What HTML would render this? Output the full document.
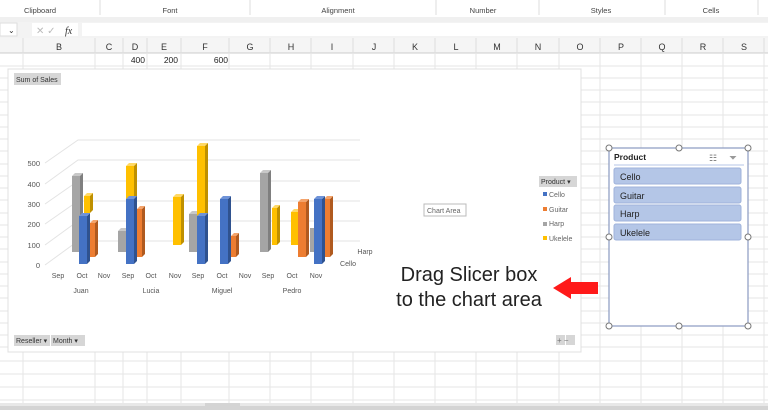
<!DOCTYPE html><html><head><style>
body{margin:0;width:768px;height:410px;overflow:hidden;background:#fff;font-family:"Liberation Sans",sans-serif;position:relative}
.a{position:absolute}
</style></head><body>
<svg class="a" style="left:0;top:0" width="768" height="410">
<!-- ribbon -->
<rect x="0" y="0" width="768" height="17" fill="#fff"/>
<rect x="0" y="17" width="768" height="5" fill="#f0f0f0"/>
<g font-size="7.5" fill="#444" text-anchor="middle">
<text x="40" y="13">Clipboard</text><text x="170" y="13">Font</text><text x="338" y="13">Alignment</text><text x="483" y="13">Number</text><text x="601" y="13">Styles</text><text x="711" y="13">Cells</text></g>
<g stroke="#ddd"><line x1="100" y1="0" x2="100" y2="15"/><line x1="250" y1="0" x2="250" y2="15"/><line x1="436" y1="0" x2="436" y2="15"/><line x1="539" y1="0" x2="539" y2="15"/><line x1="665" y1="0" x2="665" y2="15"/><line x1="758" y1="0" x2="758" y2="15"/></g>
<!-- formula bar -->
<rect x="0" y="22" width="768" height="16" fill="#f3f3f3"/>
<rect x="0" y="23" width="17" height="13" fill="#fff" stroke="#ddd"/>
<text x="8" y="33" font-size="8" fill="#333">⌄</text>
<rect x="32" y="23" width="46" height="13" fill="#fff"/>
<text x="36" y="34" font-size="10" fill="#bbb">✕ ✓</text><text x="65" y="34" font-size="10" font-style="italic" fill="#333" font-family="Liberation Serif">fx</text>
<rect x="82" y="23" width="686" height="13" fill="#fff"/>
<!-- column header -->
<rect x="0" y="38" width="768" height="15" fill="#f5f5f5"/>
<line x1="0" y1="53" x2="768" y2="53" stroke="#ccc"/>
<g stroke="#ddd">
<line x1="23" y1="38" x2="23" y2="53"/><line x1="95" y1="38" x2="95" y2="53"/><line x1="123" y1="38" x2="123" y2="53"/><line x1="147" y1="38" x2="147" y2="53"/><line x1="181" y1="38" x2="181" y2="53"/><line x1="229" y1="38" x2="229" y2="53"/><line x1="270" y1="38" x2="270" y2="53"/><line x1="311" y1="38" x2="311" y2="53"/><line x1="353" y1="38" x2="353" y2="53"/><line x1="394" y1="38" x2="394" y2="53"/><line x1="435" y1="38" x2="435" y2="53"/><line x1="476" y1="38" x2="476" y2="53"/><line x1="517" y1="38" x2="517" y2="53"/><line x1="559" y1="38" x2="559" y2="53"/><line x1="600" y1="38" x2="600" y2="53"/><line x1="641" y1="38" x2="641" y2="53"/><line x1="682" y1="38" x2="682" y2="53"/><line x1="723" y1="38" x2="723" y2="53"/><line x1="764" y1="38" x2="764" y2="53"/></g>
<g font-size="9" fill="#333" text-anchor="middle">
<text x="59" y="50">B</text><text x="109" y="50">C</text><text x="135" y="50">D</text><text x="164" y="50">E</text><text x="205" y="50">F</text><text x="250" y="50">G</text><text x="291" y="50">H</text><text x="332" y="50">I</text><text x="374" y="50">J</text><text x="415" y="50">K</text><text x="456" y="50">L</text><text x="497" y="50">M</text><text x="538" y="50">N</text><text x="580" y="50">O</text><text x="621" y="50">P</text><text x="662" y="50">Q</text><text x="703" y="50">R</text><text x="744" y="50">S</text></g>
<!-- grid -->
<g stroke="#e6e6e6">
<line x1="0" y1="66" x2="768" y2="66"/><line x1="0" y1="78" x2="768" y2="78"/><line x1="0" y1="90" x2="768" y2="90"/><line x1="0" y1="102" x2="768" y2="102"/><line x1="0" y1="115" x2="768" y2="115"/><line x1="0" y1="127" x2="768" y2="127"/><line x1="0" y1="139" x2="768" y2="139"/><line x1="0" y1="151" x2="768" y2="151"/><line x1="0" y1="164" x2="768" y2="164"/><line x1="0" y1="176" x2="768" y2="176"/><line x1="0" y1="188" x2="768" y2="188"/><line x1="0" y1="200" x2="768" y2="200"/><line x1="0" y1="213" x2="768" y2="213"/><line x1="0" y1="225" x2="768" y2="225"/><line x1="0" y1="237" x2="768" y2="237"/><line x1="0" y1="249" x2="768" y2="249"/><line x1="0" y1="262" x2="768" y2="262"/><line x1="0" y1="274" x2="768" y2="274"/><line x1="0" y1="286" x2="768" y2="286"/><line x1="0" y1="298" x2="768" y2="298"/><line x1="0" y1="311" x2="768" y2="311"/><line x1="0" y1="323" x2="768" y2="323"/><line x1="0" y1="335" x2="768" y2="335"/><line x1="0" y1="347" x2="768" y2="347"/><line x1="0" y1="361" x2="768" y2="361"/><line x1="0" y1="374" x2="768" y2="374"/><line x1="0" y1="387" x2="768" y2="387"/><line x1="0" y1="400" x2="768" y2="400"/>
<line x1="23" y1="53" x2="23" y2="405"/><line x1="95" y1="53" x2="95" y2="405"/><line x1="123" y1="53" x2="123" y2="405"/><line x1="147" y1="53" x2="147" y2="405"/><line x1="181" y1="53" x2="181" y2="405"/><line x1="229" y1="53" x2="229" y2="405"/><line x1="270" y1="53" x2="270" y2="405"/><line x1="311" y1="53" x2="311" y2="405"/><line x1="353" y1="53" x2="353" y2="405"/><line x1="394" y1="53" x2="394" y2="405"/><line x1="435" y1="53" x2="435" y2="405"/><line x1="476" y1="53" x2="476" y2="405"/><line x1="517" y1="53" x2="517" y2="405"/><line x1="559" y1="53" x2="559" y2="405"/><line x1="600" y1="53" x2="600" y2="405"/><line x1="641" y1="53" x2="641" y2="405"/><line x1="682" y1="53" x2="682" y2="405"/><line x1="723" y1="53" x2="723" y2="405"/><line x1="764" y1="53" x2="764" y2="405"/></g>
<g font-size="8.5" fill="#222" text-anchor="end"><text x="145" y="63">400</text><text x="178" y="63">200</text><text x="228" y="63">600</text></g>
<rect x="0" y="403" width="768" height="7" fill="#d4d4d4"/><rect x="0" y="403" width="205" height="3" fill="#e8e8e8"/><rect x="240" y="403" width="528" height="3" fill="#e8e8e8"/>
<!-- chart area -->
<rect x="8" y="69" width="573" height="283" fill="#fff" stroke="#e0e0e0"/>
<rect x="14" y="73" width="47" height="12" fill="#d6d6d6"/><text x="16" y="82" font-size="7" fill="#333">Sum of  Sales</text>
<g stroke="#e3e3e3" fill="none">
<path d="M45 265 L78 241 L360 241"/><path d="M45 245 L78 221 L360 221"/><path d="M45 224 L78 201 L360 201"/><path d="M45 204 L78 181 L360 181"/><path d="M45 184 L78 160 L360 160"/><path d="M45 163 L78 140 L360 140"/></g>
<g font-size="7.5" fill="#555" text-anchor="end"><text x="40" y="268">0</text><text x="40" y="248">100</text><text x="40" y="227">200</text><text x="40" y="207">300</text><text x="40" y="187">400</text><text x="40" y="166">500</text></g>
<!-- bars: x,top,bottom,w -->
<g id="bars"></g>
<g font-size="7" fill="#555" text-anchor="middle">
<text x="58" y="278">Sep</text><text x="82" y="278">Oct</text><text x="104" y="278">Nov</text><text x="128" y="278">Sep</text><text x="151" y="278">Oct</text><text x="175" y="278">Nov</text><text x="198" y="278">Sep</text><text x="222" y="278">Oct</text><text x="245" y="278">Nov</text><text x="268" y="278">Sep</text><text x="292" y="278">Oct</text><text x="316" y="278">Nov</text>
<text x="81" y="293">Juan</text><text x="151" y="293">Lucia</text><text x="222" y="293">Miguel</text><text x="292" y="293">Pedro</text>
<text x="365" y="254">Harp</text><text x="348" y="266">Cello</text></g>
<rect x="424" y="204" width="42" height="12" fill="#fff" stroke="#bbb"/><text x="427" y="213" font-size="7" fill="#666">Chart Area</text>
<rect x="539" y="176" width="38" height="11" fill="#d6d6d6"/><text x="541" y="184" font-size="7" fill="#333">Product ▾</text>
<g font-size="7" fill="#666"><rect x="543" y="192" width="4" height="4" fill="#4472c4"/><text x="549" y="197">Cello</text>
<rect x="543" y="207" width="4" height="4" fill="#ed7d31"/><text x="549" y="212">Guitar</text>
<rect x="543" y="222" width="4" height="4" fill="#a5a5a5"/><text x="549" y="226">Harp</text>
<rect x="543" y="236" width="4" height="4" fill="#ffc000"/><text x="549" y="241">Ukelele</text></g>
<rect x="14" y="335" width="36" height="11" fill="#d6d6d6"/><text x="16" y="343" font-size="7" fill="#333">Reseller ▾</text>
<rect x="51" y="335" width="34" height="11" fill="#d6d6d6"/><text x="53" y="343" font-size="7" fill="#333">Month ▾</text>
<rect x="556" y="335" width="9" height="10" fill="#d6d6d6"/><rect x="566" y="335" width="9" height="10" fill="#d6d6d6"/><text x="557" y="343" font-size="8" fill="#777">+ −</text>
<!-- text + arrow -->
<g font-size="20" fill="#222" text-anchor="middle"><text x="469" y="281">Drag Slicer box</text><text x="469" y="306">to the chart area</text></g>
<path d="M553 288 L571 277 L571 282 L598 282 L598 294 L571 294 L571 299 Z" fill="#ff1a1a"/>
<!-- slicer -->
<rect x="609" y="148" width="139" height="178" fill="#fff" stroke="#8a9ac0" stroke-width="1.2"/>
<text x="614" y="160" font-size="8.5" font-weight="bold" fill="#222">Product</text>
<text x="709" y="161" font-size="9" fill="#777">☷</text><text x="729" y="161" font-size="10" fill="#999">⏷</text>
<line x1="614" y1="165" x2="744" y2="165" stroke="#b4c6e7"/>
<g fill="#b4c6e7" stroke="#9fb3db"><rect x="614" y="168" width="127" height="16" rx="2"/><rect x="614" y="187" width="127" height="16" rx="2"/><rect x="614" y="205" width="127" height="16" rx="2"/><rect x="614" y="224" width="127" height="16" rx="2"/></g>
<g font-size="9" fill="#222"><text x="620" y="180">Cello</text><text x="620" y="199">Guitar</text><text x="620" y="217">Harp</text><text x="620" y="236">Ukelele</text></g>
<g fill="#fff" stroke="#777"><circle cx="609" cy="148" r="3"/><circle cx="679" cy="148" r="3"/><circle cx="748" cy="148" r="3"/><circle cx="609" cy="237" r="3"/><circle cx="748" cy="237" r="3"/><circle cx="609" cy="326" r="3"/><circle cx="679" cy="326" r="3"/><circle cx="748" cy="326" r="3"/></g>
</svg>
<svg class="a" style="left:0;top:0" width="768" height="410">
<defs></defs>
<!-- gray back row -->
<g>
<rect x="72" y="176" width="8" height="76" fill="#a5a5a5"/><path d="M72 176 L75 173 L83 173 L80 176Z" fill="#c8c8c8"/><path d="M80 176 L83 173 L83 249 L80 252Z" fill="#7f7f7f"/>
<rect x="118" y="231" width="8" height="21" fill="#a5a5a5"/><path d="M118 231 L121 228 L129 228 L126 231Z" fill="#c8c8c8"/>
<rect x="189" y="214" width="8" height="38" fill="#a5a5a5"/><path d="M189 214 L192 211 L200 211 L197 214Z" fill="#c8c8c8"/>
<rect x="260" y="173" width="8" height="79" fill="#a5a5a5"/><path d="M260 173 L263 170 L271 170 L268 173Z" fill="#c8c8c8"/><path d="M268 173 L271 170 L271 249 L268 252Z" fill="#7f7f7f"/>
<rect x="310" y="228" width="6" height="24" fill="#a5a5a5"/>
</g>
<g>
<rect x="84" y="196" width="6" height="17" fill="#ffc000"/><path d="M84 196 L87 193 L93 193 L90 196Z" fill="#ffd966"/><path d="M90 196 L93 193 L93 210 L90 213Z" fill="#bf9000"/>
<rect x="126" y="166" width="8" height="44" fill="#ffc000"/><path d="M126 166 L129 163 L137 163 L134 166Z" fill="#ffd966"/><path d="M134 166 L137 163 L137 207 L134 210Z" fill="#bf9000"/>
<rect x="173" y="197" width="8" height="48" fill="#ffc000"/><path d="M173 197 L176 194 L184 194 L181 197Z" fill="#ffd966"/><path d="M181 197 L184 194 L184 242 L181 245Z" fill="#bf9000"/>
<rect x="197" y="146" width="8" height="99" fill="#ffc000"/><path d="M197 146 L200 143 L208 143 L205 146Z" fill="#ffd966"/><path d="M205 146 L208 143 L208 242 L205 245Z" fill="#bf9000"/>
<rect x="272" y="208" width="5" height="37" fill="#ffc000"/><path d="M277 208 L280 205 L280 242 L277 245Z" fill="#bf9000"/><path d="M272 208 L275 205 L280 205 L277 208Z" fill="#ffd966"/>
<rect x="291" y="212" width="7" height="33" fill="#ffc000"/><path d="M291 212 L294 209 L301 209 L298 212Z" fill="#ffd966"/>
</g>
<g>
<rect x="90" y="223" width="5" height="34" fill="#ed7d31"/><path d="M95 223 L98 220 L98 254 L95 257Z" fill="#b05a1f"/><path d="M90 223 L93 220 L98 220 L95 223Z" fill="#f4a46c"/>
<rect x="137" y="209" width="5" height="48" fill="#ed7d31"/><path d="M142 209 L145 206 L145 254 L142 257Z" fill="#b05a1f"/><path d="M137 209 L140 206 L145 206 L142 209Z" fill="#f4a46c"/>
<rect x="231" y="236" width="5" height="21" fill="#ed7d31"/><path d="M236 236 L239 233 L239 254 L236 257Z" fill="#b05a1f"/><path d="M231 236 L234 233 L239 233 L236 236Z" fill="#f4a46c"/>
<rect x="298" y="202" width="8" height="55" fill="#ed7d31"/><path d="M306 202 L309 199 L309 254 L306 257Z" fill="#b05a1f"/><path d="M298 202 L301 199 L309 199 L306 202Z" fill="#f4a46c"/>
<rect x="324" y="199" width="6" height="58" fill="#ed7d31"/><path d="M330 199 L333 196 L333 254 L330 257Z" fill="#b05a1f"/><path d="M324 199 L327 196 L333 196 L330 199Z" fill="#f4a46c"/>
</g>
<g>
<rect x="79" y="216" width="8" height="48" fill="#4472c4"/><path d="M87 216 L90 213 L90 261 L87 264Z" fill="#2f528f"/><path d="M79 216 L82 213 L90 213 L87 216Z" fill="#6f93d8"/>
<rect x="126" y="199" width="8" height="65" fill="#4472c4"/><path d="M134 199 L137 196 L137 261 L134 264Z" fill="#2f528f"/><path d="M126 199 L129 196 L137 196 L134 199Z" fill="#6f93d8"/>
<rect x="197" y="216" width="8" height="48" fill="#4472c4"/><path d="M205 216 L208 213 L208 261 L205 264Z" fill="#2f528f"/><path d="M197 216 L200 213 L208 213 L205 216Z" fill="#6f93d8"/>
<rect x="220" y="199" width="8" height="65" fill="#4472c4"/><path d="M228 199 L231 196 L231 261 L228 264Z" fill="#2f528f"/><path d="M220 199 L223 196 L231 196 L228 199Z" fill="#6f93d8"/>
<rect x="314" y="199" width="8" height="65" fill="#4472c4"/><path d="M322 199 L325 196 L325 261 L322 264Z" fill="#2f528f"/><path d="M314 199 L317 196 L325 196 L322 199Z" fill="#6f93d8"/>
</g>
</svg>
</body></html>
